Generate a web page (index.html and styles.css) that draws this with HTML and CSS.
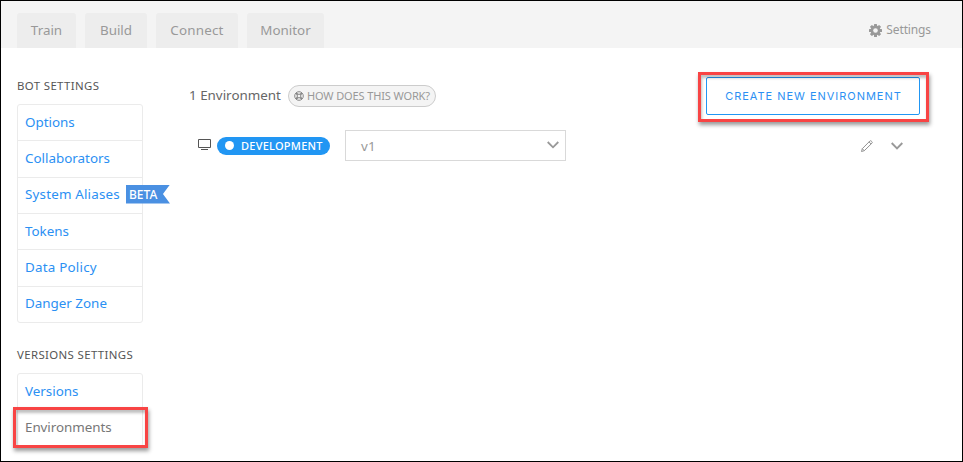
FILE: index.html
```
<!DOCTYPE html>
<html lang="en">
<head>
<meta charset="utf-8">
<title>Environments</title>
<link rel="stylesheet" href="styles.css">
</head>
<body>
<div class="app">
  <header class="topbar">
    <nav class="tabs">
      <a class="tab train">Train</a>
      <a class="tab build">Build</a>
      <a class="tab connect">Connect</a>
      <a class="tab monitor">Monitor</a>
    </nav>
    <a class="settings">
      <svg width="13" height="13" viewBox="0 0 13 13"><g fill="#999"><rect x="5" y="0" width="3" height="13" rx=".5"/><rect x="5" y="0" width="3" height="13" rx=".5" transform="rotate(45 6.5 6.5)"/><rect x="5" y="0" width="3" height="13" rx=".5" transform="rotate(90 6.5 6.5)"/><rect x="5" y="0" width="3" height="13" rx=".5" transform="rotate(135 6.5 6.5)"/><circle cx="6.5" cy="6.5" r="4.9"/></g><circle cx="6.5" cy="6.5" r="2.3" fill="#f4f4f4"/></svg>
      <span>Settings</span>
    </a>
  </header>
  <div class="body">
    <aside class="sidebar">
      <h2 class="bot">BOT SETTINGS</h2>
      <ul class="menu">
        <li><a>Options</a></li>
        <li><a>Collaborators</a></li>
        <li><a class="aliases">System Aliases</a><span class="beta"><span>BETA</span></span></li>
        <li><a>Tokens</a></li>
        <li><a class="policy">Data Policy</a></li>
        <li><a>Danger Zone</a></li>
      </ul>
      <h2 class="versions">VERSIONS SETTINGS</h2>
      <ul class="menu">
        <li><a>Versions</a></li>
        <li class="active"><a>Environments</a><span class="mark"></span></li>
      </ul>
    </aside>
    <main class="content">
      <div class="heading">
        <span class="count">1 Environment</span>
        <a class="help">
          <svg width="10" height="10" viewBox="0 0 10 10" fill="none" stroke="#888"><circle cx="5" cy="5" r="4.3"/><circle cx="5" cy="5" r="1.9"/><path d="M2 2l1.7 1.7M8 2L6.300 3.700M2 8l1.700-1.700M8 8L6.300 6.300" stroke-width="1.900"/></svg>
          <span>HOW DOES THIS WORK?</span>
        </a>
        <button class="create"><span>CREATE NEW ENVIRONMENT</span><i class="mark"></i></button>
      </div>
      <div class="row">
        <svg class="monitor-icon" width="14" height="12" viewBox="0 0 14 12" fill="none" stroke="#555"><path d="M.5 .5h12v8H.5zM3 10.500h7"/></svg>
        <span class="badge"><i class="dot"></i><span>DEVELOPMENT</span></span>
        <div class="select"><span>v1</span>
          <svg width="12" height="8" viewBox="0 0 12 8" fill="none" stroke="#999" stroke-width="1.800"><path d="M.7 1l5.300 5.300L11.300 1"/></svg>
        </div>
        <svg class="pencil" width="12" height="12" viewBox="0 0 12 12" fill="none" stroke="#888" stroke-width=".9"><path d="M.5 11.500l.8-2.800L8.900 1q.7-.6 1.300 0l.8.8q.6.7 0 1.300L3.300 10.700zM8 1.900l2.100 2.100M1.300 8.700l2 2"/></svg>
        <svg class="expand" width="12" height="8" viewBox="0 0 12 8" fill="none" stroke="#999" stroke-width="1.900"><path d="M.7 1l5.300 5.300L11.300 1"/></svg>
      </div>
    </main>
  </div>
</div>
</body>
</html>
```
FILE: styles.css
```
* { box-sizing: border-box; }
body { margin: 0; font-family: "Noto Sans", sans-serif; font-size: 13.4px; color: #666; background: #fff; }
svg { display: block; flex: none; }
.app { width: 963px; height: 462px; border: 1px solid #000; overflow: hidden; }
.topbar { height: 47px; background: #f4f4f4; display: flex; align-items: flex-end; justify-content: space-between; padding: 0 31px 0 16px; color: #999; }
.tabs { display: flex; gap: 9px; }
.tab { height: 35px; background: #ededed; border-radius: 3px 3px 0 0; display: flex; align-items: center; justify-content: center; font-size: 13.4px; padding-bottom: 2px; }
.train { width: 59px; }
.build { width: 62px; }
.connect { width: 82px; letter-spacing: .2px; }
.monitor { width: 77px; }
.settings { height: 35px; display: flex; align-items: center; gap: 4px; font-size: 12px; letter-spacing: -.12px; padding-bottom: 2px; }
.settings svg { margin-top: 1px; }
.body { display: flex; }
.sidebar { width: 126px; margin-left: 16px; }
h2 { margin: 0; font-size: 11.4px; font-weight: 400; line-height: 16px; white-space: nowrap; color: #555; letter-spacing: .38px; }
.bot { margin: 30px 0 10px; }
.versions { margin: 24px 0 10px; }
.menu { margin: 0; padding: 0; list-style: none; border: 1px solid #ebebeb; border-radius: 3px; }
.menu li { position: relative; height: 36.4px; padding: 0 0 2px 7px; display: flex; align-items: center; white-space: nowrap; color: #2b90f3; letter-spacing: 0; }
.menu li:first-child { height: 35.2px; }
.aliases { letter-spacing: .18px; }
.policy { letter-spacing: .22px; }
.menu li + li { border-top: 1px solid #ebebeb; }
.menu .active { color: #777; letter-spacing: -.05px; }
.beta { position: absolute; left: 108px; top: 7px; width: 44px; height: 19px; background: #4a90e2; color: #fff; font-size: 12px; font-weight: 500; letter-spacing: 0; line-height: 19px; padding-left: 3px; clip-path: polygon(0 0, 100% 0, 84% 50%, 100% 100%, 0 100%); }
.mark { position: absolute; border: 3px solid #f84444; box-shadow: 1px 3px 4px rgba(0,0,0,.4), inset 1px 3px 3px rgba(0,0,0,.25); }
.active .mark { left: -5px; top: -3px; width: 135px; height: 41px; }
.content { flex: 1; margin-left: 46px; padding: 29px 42px 0 0; }
.heading { display: flex; align-items: center; height: 38px; }
.count { width: 99px; white-space: nowrap; letter-spacing: 0; padding-bottom: 2px; }
.help { width: 148px; height: 22px; border: 1px solid #ccc; border-radius: 11px; background: #f4f4f4; display: flex; align-items: center; gap: 3px; padding: 0 0 1px 5px; font-size: 11px; letter-spacing: -.13px; color: #999; white-space: nowrap; }
.create { position: relative; margin-left: auto; width: 214px; height: 38px; border: 1px solid #2196f3; border-radius: 2px; background: #fff; color: #2b90f3; font: 11px Inter, sans-serif; letter-spacing: .97px; padding: 0 0 0 1px; white-space: nowrap; }
.create .mark { left: -9px; top: -6px; width: 231px; height: 50px; }
.row { display: flex; align-items: center; height: 31px; margin-top: 15px; }
.monitor-icon { margin: -2px 5px 0 9px; }
.badge { width: 113px; height: 18px; border-radius: 9px; background: #2196f3; color: #fff; display: flex; align-items: center; font-size: 11px; font-weight: 500; letter-spacing: .25px; }
.dot { width: 9px; height: 9px; border-radius: 50%; background: #fff; margin: 0 7px 0 8px; }
.select { width: 221px; height: 31px; margin-left: 15px; border: 1px solid #d9d9d9; display: flex; align-items: center; justify-content: space-between; padding: 0 6px 0 15px; color: #999; letter-spacing: .2px; }
.select svg { margin-top: -2px; }
.pencil { margin-left: auto; }
.expand { margin: 0 17px 0 18px; }
```
